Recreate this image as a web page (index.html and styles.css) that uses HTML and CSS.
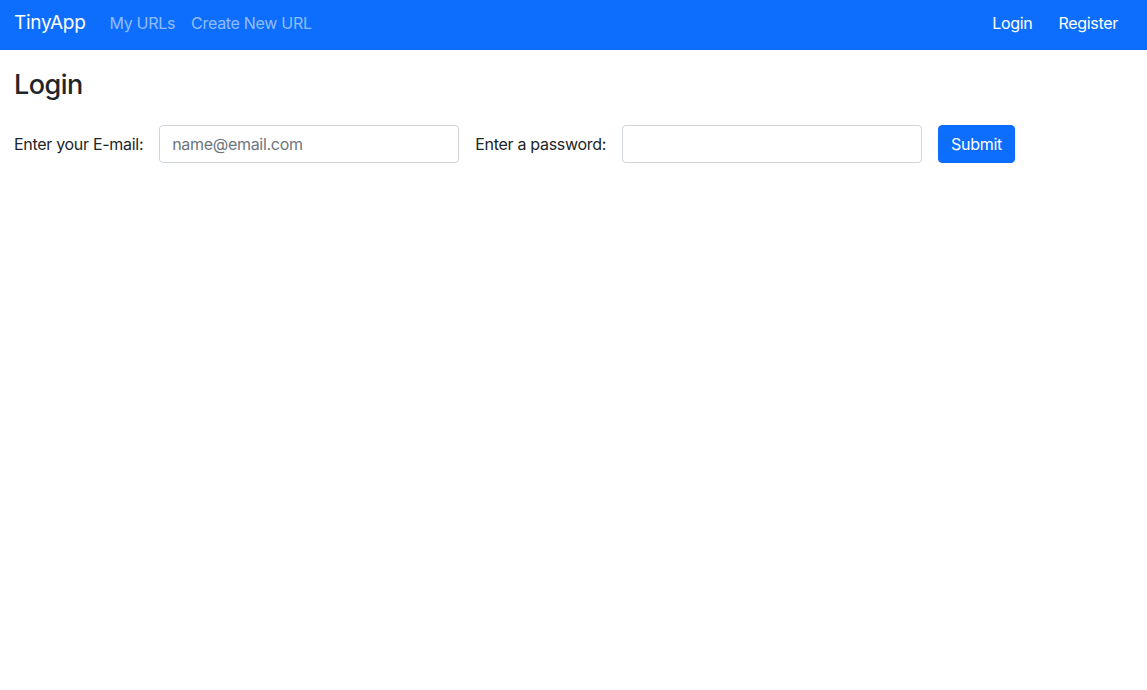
FILE: index.html
```html
<!DOCTYPE html>
<html lang="en">
<head>
<meta charset="utf-8">
<title>TinyApp</title>
<link rel="stylesheet" href="styles.css">
</head>
<body>
<nav class="navbar">
  <div class="nav-left">
    <a class="brand" href="#">TinyApp</a>
    <a class="nav-link muted" href="#">My URLs</a>
    <a class="nav-link muted" href="#">Create New URL</a>
  </div>
  <div class="nav-right">
    <a class="nav-link" href="#">Login</a>
    <a class="nav-link" href="#">Register</a>
  </div>
</nav>
<main class="content">
  <h3 class="title">Login</h3>
  <form class="login-form">
    <label class="label" for="email">Enter your E-mail:</label>
    <input class="input" id="email" type="text" placeholder="name@email.com">
    <label class="label" for="password">Enter a password:</label>
    <input class="input" id="password" type="password">
    <button class="btn" type="button">Submit</button>
  </form>
</main>
</body>
</html>
```
FILE: styles.css
```css
* { box-sizing: border-box; }
body {
  margin: 0;
  font-family: Inter, "Liberation Sans", Arial, sans-serif;
  font-size: 16px;
  line-height: 1.5;
  color: #212529;
  background: #fff;
  letter-spacing: -0.3px;
}
a { text-decoration: none; }
.navbar {
  height: 50px;
  background: #0d6efd;
  display: flex;
  align-items: center;
  justify-content: space-between;
  padding: 0 13px 4px 14px;
}
.nav-left, .nav-right {
  display: flex;
  align-items: center;
}
.brand {
  color: #fff;
  font-size: 19px;
  margin-right: 16px;
  letter-spacing: -0.3px;
}
.nav-link {
  color: #fff;
  font-size: 16px;
  padding: 8px 8px;
}
.nav-left .nav-link { padding: 8px 8px; }
.nav-right .nav-link { padding: 8px 13px; }
.nav-link.muted { color: rgba(255,255,255,0.55); }
.nav-right .nav-link:last-child { padding-right: 16px; }
.content {
  padding: 0 14px;
}
.title {
  margin: 19px 0 24px;
  font-size: 27px;
  font-weight: 500;
  line-height: 1.2;
  letter-spacing: -0.5px;
}
.login-form {
  display: flex;
  align-items: center;
  gap: 16px;
}
.label {
  font-size: 16px;
}
.input {
  width: 300px;
  height: 38px;
  padding: 6px 12px;
  font-family: inherit;
  font-size: 16px;
  letter-spacing: -0.3px;
  color: #212529;
  border: 1px solid #ced4da;
  border-radius: 4px;
  background: #fff;
}
.input::placeholder { color: #6c757d; }
.btn {
  height: 38px;
  width: 77px;
  font-family: inherit;
  font-size: 16px;
  letter-spacing: -0.3px;
  color: #fff;
  background: #0d6efd;
  border: 1px solid #0d6efd;
  border-radius: 4px;
  padding: 6px 12px;
}
```
